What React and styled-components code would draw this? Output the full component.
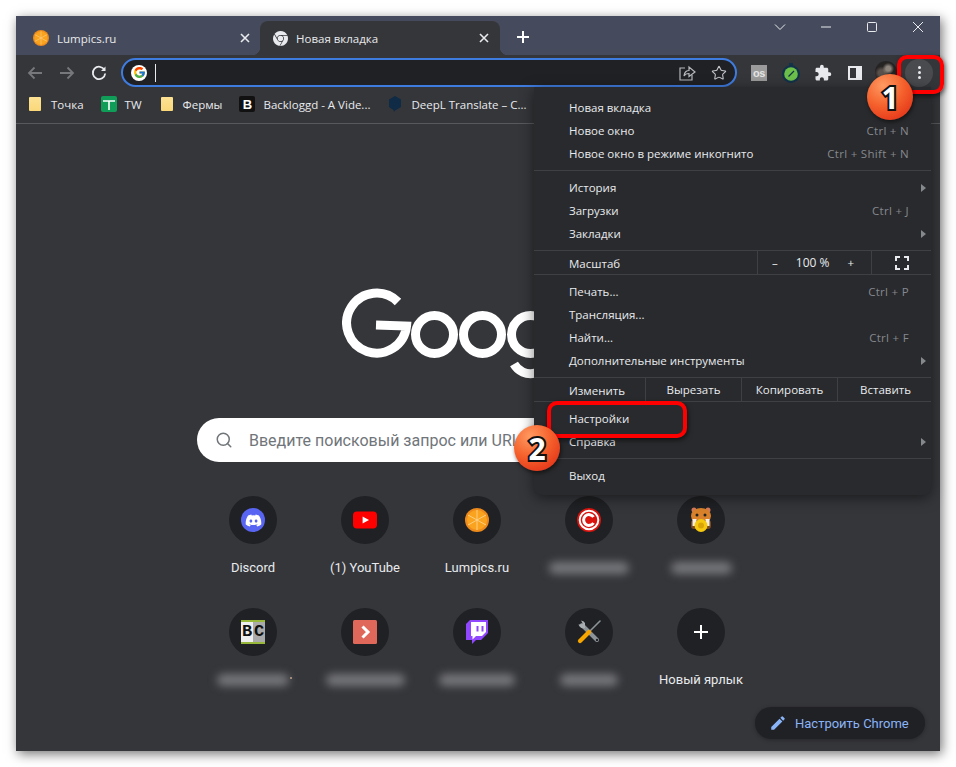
import React from 'react';
import styled, { createGlobalStyle } from 'styled-components';
import { FcGoogle } from 'react-icons/fc';
import { FaDiscord } from 'react-icons/fa';
import { SiGooglechrome } from 'react-icons/si';
import { MdExtension, MdEdit } from 'react-icons/md';
import { Star, Search } from 'lucide-react';

const GlobalStyle = createGlobalStyle`
  html, body { margin: 0; padding: 0; background: #fff; }
  * { box-sizing: border-box; }
`;

const UI_FONT = '"Open Sans", "Noto Sans", sans-serif';

const Page = styled.div`
  position: relative;
  width: 956px;
  height: 767px;
  padding: 16px;
  overflow: hidden;
  background: #fff;
`;

const Window = styled.div`
  width: 924px;
  height: 735px;
  display: flex;
  flex-direction: column;
  background: #35363a;
  box-shadow: 2px 3px 11px rgba(0, 0, 0, 0.55);
  font-family: ${UI_FONT};
  color: #e8eaed;
`;

/* ---- tab strip ---- */

const TabStrip = styled.div`
  display: flex;
  height: 39px;
  flex-shrink: 0;
  background: #454b5c;
`;

const Tab = styled.div`
  position: relative;
  display: flex;
  align-items: center;
  width: ${p => (p.$active ? 240 : 244)}px;
  margin-top: 5px;
  padding: ${p => (p.$active ? '0 8px 0 13px' : '0 7px 0 17px')};
  border-radius: 8px 8px 0 0;
  background: ${p => (p.$active ? '#35363a' : 'transparent')};
  font-size: 11.5px;
  ${p => p.$active && `
    &::before, &::after {
      content: '';
      position: absolute;
      bottom: 0;
      width: 8px;
      height: 8px;
    }
    &::before {
      left: -8px;
      background: radial-gradient(circle at 0 0, transparent 8px, #35363a 8.5px);
    }
    &::after {
      right: -8px;
      background: radial-gradient(circle at 100% 0, transparent 8px, #35363a 8.5px);
    }
  `}
`;

const TabTitle = styled.span`
  flex: 1;
  margin-left: 8px;
`;

const TabClose = styled.svg`
  width: 16px;
  height: 16px;
  stroke: #e8eaed;
  stroke-width: 1.6;
  fill: none;
`;

const NewTab = styled.svg`
  width: 16px;
  height: 16px;
  margin: 13px 0 0 15px;
  stroke: #fff;
  stroke-width: 2;
  fill: none;
`;

const WindowControls = styled.div`
  display: flex;
  margin-left: auto;
  margin-right: -1px;
  height: 22px;
`;

const ControlButton = styled.div`
  width: 46px;
  height: 22px;
  display: flex;
  align-items: center;
  justify-content: center;
  svg { width: 12px; height: 12px; stroke: #e8eaed; stroke-width: 1; fill: none; }
`;

/* ---- toolbar ---- */

const Toolbar = styled.div`
  display: flex;
  align-items: center;
  height: 32px;
  flex-shrink: 0;
  padding: 3px 0 0 3px;
`;

const ToolButton = styled.div`
  width: 32px;
  height: 28px;
  flex-shrink: 0;
  display: flex;
  align-items: center;
  justify-content: center;
`;

const NavIcon = styled.svg`
  width: 18px;
  height: 18px;
  fill: none;
  stroke: ${p => (p.$dim ? '#77787c' : '#e8eaed')};
  stroke-width: 1.8;
`;

const ShareIcon = styled.svg`
  width: 18px;
  height: 18px;
  fill: none;
  stroke: #b5b7ba;
  stroke-width: 1.2;
`;

const Omnibox = styled.div`
  display: flex;
  align-items: center;
  width: 616px;
  height: 29px;
  margin: 0 6px;
  padding: 0 8px 0 8px;
  border: 2px solid #3f7ce0;
  border-radius: 15px;
  background: #202124;
`;

const GoogleBadge = styled.div`
  width: 16px;
  height: 16px;
  border-radius: 50%;
  background: #fff;
  display: flex;
  align-items: center;
  justify-content: center;
`;

const Caret = styled.div`
  width: 1px;
  height: 18px;
  margin-left: 8px;
  background: #e8eaed;
`;

const OmniActions = styled.div`
  display: flex;
  align-items: center;
  gap: 15px;
  margin-left: auto;
`;

const LastFm = styled.div`
  width: 16px;
  height: 16px;
  display: flex;
  align-items: center;
  justify-content: center;
  background: #9b9b9b;
  color: #e4e4e4;
  font: 700 11px/14px "Liberation Sans", sans-serif;
  letter-spacing: -0.5px;
`;

const Avatar = styled.div`
  width: 22px;
  height: 22px;
  margin: -2px 0 0 -2px;
  border-radius: 50%;
  background:
    radial-gradient(circle at 60% 35%, #8d857c 0 12%, transparent 30%),
    radial-gradient(circle at 30% 55%, #5a514c 0 16%, transparent 35%),
    #262323;
`;

const Kebab = styled.div`
  width: 28px;
  height: 28px;
  border-radius: 50%;
  background: #4a4b4f;
  display: flex;
  flex-direction: column;
  align-items: center;
  justify-content: center;
  gap: 2px;
  span { width: 3px; height: 3px; border-radius: 50%; background: #e8eaed; }
`;

/* ---- bookmarks ---- */

const BookmarksBar = styled.div`
  display: flex;
  align-items: center;
  gap: 17px;
  height: 37px;
  flex-shrink: 0;
  padding: 0 0 2px 11px;
  border-bottom: 1px solid #58595d;
  font-size: 11.5px;
`;

const Bookmark = styled.div`
  display: flex;
  align-items: center;
  gap: 8px;
  white-space: nowrap;
`;

const FolderIcon = styled.div`
  width: 12px;
  height: 14px;
  margin: 0 2px;
  border-radius: 1px;
  background: linear-gradient(#fde293, #fad87a);
`;

const SquareIcon = styled.div`
  width: 16px;
  height: 16px;
  border-radius: 2px;
  display: flex;
  align-items: center;
  justify-content: center;
  background: ${p => p.$bg};
  color: #fff;
  font: 700 13px "Liberation Sans", sans-serif;
`;

/* ---- new tab page ---- */

const NewTabPage = styled.div`
  position: relative;
  flex: 1;
  display: flex;
  flex-direction: column;
  align-items: center;
  padding-top: 164px;
  font-family: Roboto, sans-serif;
`;

const Logo = styled.svg`
  width: 272px;
  height: 92px;
  flex-shrink: 0;
  fill: none;
  stroke: #fff;
  stroke-width: 9;
`;

const SearchBox = styled.div`
  display: flex;
  align-items: center;
  width: 562px;
  height: 44px;
  margin-top: 38px;
  padding-left: 18px;
  border-radius: 22px;
  background: #fff;
  color: #70757a;
  font-size: 16px;
  svg { margin-right: 16px; }
`;

const Shortcuts = styled.div`
  display: grid;
  grid-template-columns: repeat(5, 112px);
  grid-auto-rows: 112px;
  width: 562px;
  margin-top: 18px;
`;

const Shortcut = styled.div`
  position: relative;
  display: flex;
  flex-direction: column;
  align-items: center;
  padding-top: 16px;
`;

const Bubble = styled.div`
  width: 48px;
  height: 48px;
  border-radius: 50%;
  background: #202124;
  display: flex;
  align-items: center;
  justify-content: center;
`;

const Label = styled.div`
  margin-top: 16px;
  font-size: 13px;
  line-height: 16px;
  color: #e8eaed;
  white-space: nowrap;
`;

const BlurredLabel = styled.div`
  width: ${p => p.$w - 4}px;
  height: 12px;
  margin-top: 18px;
  background: #76777b;
  border-radius: 6px;
  filter: blur(4px);
`;

const StrayDot = styled.div`
  position: absolute;
  left: 93px;
  top: 85px;
  width: 2px;
  height: 2px;
  background: #a08a78;
`;

const Customize = styled.div`
  position: absolute;
  right: 15px;
  bottom: 12px;
  width: 170px;
  height: 32px;
  display: flex;
  align-items: center;
  gap: 8px;
  padding-left: 14px;
  border-radius: 16px;
  background: #202124;
  color: #8ab4f8;
  font-size: 13px;
  box-shadow: 0 1px 4px rgba(0, 0, 0, 0.3);
`;

/* ---- chrome menu ---- */

const Menu = styled.div`
  position: absolute;
  left: 534px;
  top: 87px;
  width: 397px;
  height: 408px;
  padding-top: 9px;
  border-radius: 0 0 8px 8px;
  background: #292a2d;
  box-shadow: 0 3px 14px rgba(0, 0, 0, 0.5);
  font-family: ${UI_FONT};
  font-size: 11.5px;
  color: #e8eaed;
  z-index: 10;
`;

const MenuSection = styled.div`
  padding: ${p => (p.$flush ? 0 : 5)}px 0;
  border-bottom: ${p => (p.$last ? 'none' : '1px solid #3f4044')};
  &:first-child { padding-top: 0; }
`;

const MenuRow = styled.div`
  position: relative;
  display: flex;
  align-items: center;
  justify-content: space-between;
  height: 23px;
  padding: 0 22px 0 35px;
`;

const Shortcode = styled.span`
  color: #85888d;
  letter-spacing: 0.3px;
`;

const SubArrow = styled.span`
  position: absolute;
  right: 5px;
  width: 0;
  height: 0;
  border-left: 5px solid #85888d;
  border-top: 4px solid transparent;
  border-bottom: 4px solid transparent;
`;

const SplitRow = styled.div`
  display: flex;
  align-items: center;
  height: 23px;
  padding-left: 35px;
`;

const SplitLabel = styled.div`
  width: ${p => p.$w}px;
  flex-shrink: 0;
  padding-top: 1px;
`;

const SplitCell = styled.div`
  width: ${p => p.$w}px;
  height: 100%;
  flex-shrink: 0;
  display: flex;
  align-items: center;
  justify-content: ${p => p.$justify || 'center'};
  padding: ${p => p.$pad || 0};
  border-left: 1px solid #3f4044;
`;

const ZoomValue = styled.span`
  font-size: 12px;
`;

const FullscreenIcon = styled.svg`
  width: 14px;
  height: 14px;
  stroke: #e8eaed;
  stroke-width: 2;
  fill: none;
`;

/* ---- annotations ---- */

const Mark = styled.div`
  position: absolute;
  left: ${p => p.$x}px;
  top: ${p => p.$y}px;
  width: ${p => p.$w}px;
  height: ${p => p.$h}px;
  border: 4px solid #f00;
  border-radius: 10px;
  box-shadow: 1px 2px 5px rgba(0, 0, 0, 0.6);
  z-index: 20;
`;

const StepBadge = styled.div`
  position: absolute;
  left: ${p => p.$x - 23}px;
  top: ${p => p.$y - 23}px;
  width: 46px;
  height: 46px;
  display: flex;
  align-items: center;
  justify-content: center;
  border-radius: 50%;
  background: radial-gradient(circle at 35% 25%, #ff9a62 0, #f5612c 45%, #dd2412 100%);
  box-shadow: 1px 2px 4px rgba(0, 0, 0, 0.55);
  color: #fff;
  font: 700 30px "Open Sans", sans-serif;
  -webkit-text-stroke: 4px #111;
  paint-order: stroke fill;
  z-index: 30;
`;

/* ---- drawings ---- */

const Orange = ({ size = 16 }) => (
  <svg width={size} height={size} viewBox="0 0 24 24">
    <circle cx="12" cy="12" r="12" fill="#ee8a1c" />
    <circle cx="12" cy="12" r="10" fill="#f9a31f" />
    <g stroke="#ffd28a" strokeWidth="0.9">
      <line x1="12" y1="2" x2="12" y2="22" />
      <line x1="3" y1="7" x2="21" y2="17" />
      <line x1="3" y1="17" x2="21" y2="7" />
    </g>
  </svg>
);

const YouTube = () => (
  <svg width="24" height="24" viewBox="0 0 24 24">
    <rect x="0" y="3.5" width="24" height="17" rx="4" fill="#f00" />
    <path d="M9.6 8.4 L16 12 L9.6 15.6 Z" fill="#fff" />
  </svg>
);

const CopyrightMark = () => (
  <svg width="24" height="24" viewBox="0 0 24 24" fill="none">
    <circle cx="12" cy="12" r="12" fill="#d9140e" />
    <circle cx="12" cy="12" r="9.3" stroke="#fff" strokeWidth="2" />
    <path d="M16.5 9 A5.4 5.4 0 1 0 16.5 15" stroke="#fff" strokeWidth="3" />
  </svg>
);

const Hamster = () => (
  <svg width="24" height="26" viewBox="0 0 24 26">
    <circle cx="5" cy="3" r="2.5" fill="#d77b5a" />
    <circle cx="19" cy="3" r="2.5" fill="#d77b5a" />
    <ellipse cx="12" cy="9" rx="10" ry="8" fill="#d9822b" />
    <rect x="2" y="13" width="20" height="9" rx="3" fill="#7a4a22" />
    <circle cx="8" cy="8" r="1.5" fill="#222" />
    <circle cx="16" cy="8" r="1.5" fill="#222" />
    <path d="M3.5 12h4v7h-4zM16.5 12h4v7h-4z" fill="#f7ece0" />
    <circle cx="12" cy="18.5" r="6.5" fill="#f6c90e" />
    <circle cx="12" cy="18.5" r="3" fill="#d9a406" />
  </svg>
);

const Tools = () => (
  <svg width="24" height="24" viewBox="0 0 24 24" fill="none" strokeLinecap="round">
    <path d="M5 5 L20 20" stroke="#8d9499" strokeWidth="4" />
    <path d="M1.5 4.5 A5 5 0 0 0 8 8 L8 3 A5 5 0 0 0 4 0.5 L6 4 Z" fill="#a8aeb2" />
    <circle cx="20" cy="20" r="1.2" fill="#202124" />
    <path d="M23 1 L13 11" stroke="#8d9499" strokeWidth="1.6" />
    <path d="M12 12 L3 21" stroke="#f7a600" strokeWidth="4.2" />
  </svg>
);

const BcIcon = styled.div`
  width: 24px;
  height: 24px;
  display: flex;
  border-top: 2px solid #98b83c;
  border-bottom: 2px solid #98b83c;
  font: 700 17px/20px "Liberation Mono", monospace;
  span { flex: 1; text-align: center; color: #111; }
  span:first-child { background: #eee; }
  span:last-child { background: #aaa; }
`;

const MoviePlay = () => (
  <svg width="24" height="24" viewBox="0 0 24 24" fill="none">
    <rect width="24" height="24" rx="1.5" fill="#e0685a" />
    <path d="M9.5 6.5 L15 12 L9.5 17.5" stroke="#fff" strokeWidth="3" />
  </svg>
);

const Twitch = () => (
  <svg width="22" height="24" viewBox="0 0 22 24">
    <path d="M4 0 H22 V13 L15 20 H10 L6 24 V20 H0 V4 Z" fill="#9146ff" />
    <path d="M5 2 H20 V12 L16 16 H10 L6.5 19.5 V16 H5 Z" fill="#fff" />
    <path d="M10.5 6 H12.5 V11.5 H10.5 Z M15.5 6 H17.5 V11.5 H15.5 Z" fill="#9146ff" />
  </svg>
);

const DeepL = () => (
  <svg width="16" height="16" viewBox="0 0 16 16">
    <path d="M8 0 L14 3.5 L14 11 L8 14.5 L7 16 L6.5 14 L2 11 L2 3.5 Z" fill="#0f2b46" />
  </svg>
);

const SidePanel = () => (
  <svg width="14" height="14" viewBox="0 0 14 14">
    <path fillRule="evenodd" d="M0 0h14v14H0z M2 2v10h6V2z" fill="#e8eaed" />
  </svg>
);

const Share = () => (
  <ShareIcon viewBox="0 0 18 18">
    <path d="M7 4 H2 V16 H14 V11" />
    <path d="M6 12 C6 8 9 6.5 11 6.5 V3 L17 8 L11 12.5 V9.5 C9 9.5 7 10 6 12 Z" />
  </ShareIcon>
);

const Timer = () => (
  <svg width="18" height="20" viewBox="0 0 18 20">
    <rect x="7" y="0" width="4" height="3" fill="#12324a" />
    <circle cx="9" cy="11" r="9" fill="#12324a" />
    <circle cx="9" cy="11" r="6.8" fill="#6cc04a" />
    <line x1="6.5" y1="13.5" x2="12" y2="8" stroke="#12324a" strokeWidth="1.3" />
  </svg>
);

const Close = () => (
  <TabClose viewBox="0 0 16 16"><path d="M4 4 L12 12 M12 4 L4 12" /></TabClose>
);

const GoogleLogo = () => (
  <Logo viewBox="0 0 272 92">
    <path d="M56 14 A30 30 0 1 0 64.5 38 L34 37" />
    <circle cx="92.5" cy="46.5" r="19" />
    <circle cx="140.5" cy="46.5" r="19" />
    <circle cx="188.5" cy="46.5" r="19" />
    <path d="M207.5 25 V68 A19 19 0 0 1 172 76" />
  </Logo>
);

const DiscordIcon = styled.div`
  width: 24px;
  height: 24px;
  border-radius: 50%;
  background: #5865f2;
  display: flex;
  align-items: center;
  justify-content: center;
`;

const tiles = [
  { label: 'Discord', icon: <DiscordIcon><FaDiscord size={17} color="#fff" /></DiscordIcon> },
  { label: '(1) YouTube', icon: <YouTube /> },
  { label: 'Lumpics.ru', icon: <Orange size={24} /> },
  { blur: 84, icon: <CopyrightMark /> },
  { blur: 65, icon: <Hamster /> },
  { blur: 76, icon: <BcIcon><span>B</span><span>C</span></BcIcon>, dot: true },
  { blur: 83, icon: <MoviePlay /> },
  { blur: 80, icon: <Twitch /> },
  { blur: 62, icon: <Tools /> },
  { label: 'Новый ярлык', icon: (
    <svg width="16" height="16" viewBox="0 0 16 16" stroke="#fff" strokeWidth="2"><path d="M8 1 V15 M1 8 H15" /></svg>
  ) },
];

const menuSections = [
  [['Новая вкладка'], ['Новое окно', 'Ctrl + N'], ['Новое окно в режиме инкогнито', 'Ctrl + Shift + N']],
  [['История', null, true], ['Загрузки', 'Ctrl + J'], ['Закладки', null, true]],
];

const toolsSection = [
  ['Печать...', 'Ctrl + P'], ['Трансляция...'], ['Найти...', 'Ctrl + F'], ['Дополнительные инструменты', null, true],
];

const renderRow = ([text, keys, arrow]) => (
  <MenuRow key={text}>
    <span>{text}</span>
    {keys && <Shortcode>{keys}</Shortcode>}
    {arrow && <SubArrow />}
  </MenuRow>
);

export default function App() {
  return (
    <Page>
      <GlobalStyle />
      <Window>
        <TabStrip>
          <Tab>
            <Orange />
            <TabTitle>Lumpics.ru</TabTitle>
            <Close />
          </Tab>
          <Tab $active>
            <SiGooglechrome size={15} color="#e8eaed" />
            <TabTitle>Новая вкладка</TabTitle>
            <Close />
          </Tab>
          <NewTab viewBox="0 0 16 16"><path d="M8 2 V14 M2 8 H14" /></NewTab>
          <WindowControls>
            <ControlButton><svg viewBox="0 0 12 12"><path d="M1 3.5 L6 8.5 L11 3.5" /></svg></ControlButton>
            <ControlButton><svg viewBox="0 0 12 12"><path d="M1 6 H11" /></svg></ControlButton>
            <ControlButton><svg viewBox="0 0 12 12"><rect x="1.5" y="1.5" width="9" height="9" rx="1" /></svg></ControlButton>
            <ControlButton><svg viewBox="0 0 12 12"><path d="M1 1 L11 11 M11 1 L1 11" /></svg></ControlButton>
          </WindowControls>
        </TabStrip>

        <Toolbar>
          <ToolButton>
            <NavIcon $dim viewBox="0 0 18 18"><path d="M16 9 H3 M8.5 3.5 L3 9 L8.5 14.5" /></NavIcon>
          </ToolButton>
          <ToolButton>
            <NavIcon $dim viewBox="0 0 18 18"><path d="M2 9 H15 M9.5 3.5 L15 9 L9.5 14.5" /></NavIcon>
          </ToolButton>
          <ToolButton>
            <NavIcon viewBox="0 0 18 18">
              <path d="M14.5 6 A6.2 6.2 0 1 0 15.2 9.5" />
              <path d="M15.5 2.5 V7 H11" fill="#e8eaed" stroke="none" />
            </NavIcon>
          </ToolButton>
          <Omnibox>
            <GoogleBadge><FcGoogle size={13} /></GoogleBadge>
            <Caret />
            <OmniActions>
              <Share />
              <Star size={16} color="#c4c6c9" strokeWidth={1.6} />
            </OmniActions>
          </Omnibox>
          <ToolButton><LastFm>os</LastFm></ToolButton>
          <ToolButton><Timer /></ToolButton>
          <ToolButton><MdExtension size={18} color="#e8eaed" /></ToolButton>
          <ToolButton><SidePanel /></ToolButton>
          <ToolButton><Avatar /></ToolButton>
          <ToolButton><Kebab><span /><span /><span /></Kebab></ToolButton>
        </Toolbar>

        <BookmarksBar>
          <Bookmark><FolderIcon />Точка</Bookmark>
          <Bookmark>
            <SquareIcon $bg="#0f9d58">
              <svg width="12" height="12" viewBox="0 0 12 12" stroke="#fff" strokeWidth="1.6"><path d="M0 3 H12 M6 3 V12" /></svg>
            </SquareIcon>
            TW
          </Bookmark>
          <Bookmark><FolderIcon />Фермы</Bookmark>
          <Bookmark><SquareIcon $bg="#111">B</SquareIcon>Backloggd - A Vide...</Bookmark>
          <Bookmark><DeepL />DeepL Translate – C...</Bookmark>
        </BookmarksBar>

        <NewTabPage>
          <GoogleLogo />
          <SearchBox>
            <Search size={18} color="#70757a" strokeWidth={2} />
            Введите поисковый запрос или URL
          </SearchBox>
          <Shortcuts>
            {tiles.map((tile, i) => (
              <Shortcut key={i}>
                <Bubble>{tile.icon}</Bubble>
                {tile.label ? <Label>{tile.label}</Label> : <BlurredLabel $w={tile.blur} />}
                {tile.dot && <StrayDot />}
              </Shortcut>
            ))}
          </Shortcuts>
          <Customize>
            <MdEdit size={18} color="#8ab4f8" />
            Настроить Chrome
          </Customize>
        </NewTabPage>
      </Window>

      <Menu>
        {menuSections.map((rows, i) => (
          <MenuSection key={i}>{rows.map(renderRow)}</MenuSection>
        ))}
        <MenuSection $flush>
          <SplitRow>
            <SplitLabel $w={188}>Масштаб</SplitLabel>
            <SplitCell $w={114} $justify="space-between" $pad="0 17px 0 14px">
              <span>–</span><ZoomValue>100 %</ZoomValue><span>+</span>
            </SplitCell>
            <SplitCell $w={60}>
              <FullscreenIcon viewBox="0 0 14 14">
                <path d="M1 5 V1 H5 M9 1 H13 V5 M13 9 V13 H9 M5 13 H1 V9" />
              </FullscreenIcon>
            </SplitCell>
          </SplitRow>
        </MenuSection>
        <MenuSection>{toolsSection.map(renderRow)}</MenuSection>
        <MenuSection $flush>
          <SplitRow>
            <SplitLabel $w={76}>Изменить</SplitLabel>
            <SplitCell $w={96}>Вырезать</SplitCell>
            <SplitCell $w={96}>Копировать</SplitCell>
            <SplitCell $w={96}>Вставить</SplitCell>
          </SplitRow>
        </MenuSection>
        <MenuSection>
          {renderRow(['Настройки'])}
          {renderRow(['Справка', null, true])}
        </MenuSection>
        <MenuSection $last>{renderRow(['Выход'])}</MenuSection>
      </Menu>

      <Mark $x={897} $y={55} $w={47} $h={39} />
      <Mark $x={547} $y={401} $w={140} $h={37} />
      <StepBadge $x={890} $y={97}>1</StepBadge>
      <StepBadge $x={537} $y={448}>2</StepBadge>
    </Page>
  );
}
